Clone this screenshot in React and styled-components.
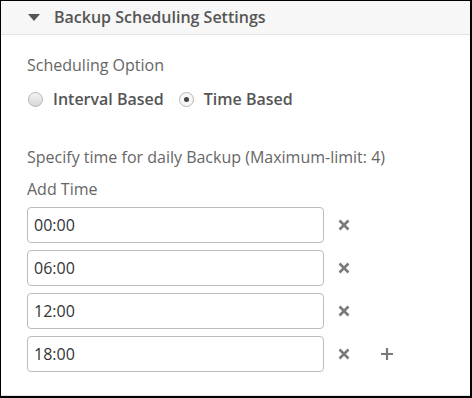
import React, { useState } from "react";
import styled, { createGlobalStyle } from "styled-components";

const GlobalStyle = createGlobalStyle`
  html, body {
    margin: 0;
    padding: 0;
    background: #ffffff;
  }
  body {
    font-family: "Open Sans", "Noto Sans", sans-serif;
  }
  * {
    box-sizing: border-box;
  }
`;

const initialTimes = ["00:00", "06:00", "12:00", "18:00"];

const App = () => {
  const [mode, setMode] = useState("time");
  const [times, setTimes] = useState(initialTimes);

  return (
    <>
      <GlobalStyle />
      <Frame>
        <Header>
          <Caret viewBox="0 0 12 8" aria-hidden="true">
            <path d="M0 0 L12 0 L6 7 Z" fill="#555555" />
          </Caret>
          <HeaderTitle>Backup Scheduling Settings</HeaderTitle>
        </Header>
        <Body>
          <Label>Scheduling Option</Label>
          <RadioGroup>
            <RadioItem onClick={() => setMode("interval")}>
              <RadioDot checked={mode === "interval"} />
              <RadioText>Interval Based</RadioText>
            </RadioItem>
            <RadioItem onClick={() => setMode("time")}>
              <RadioDot checked={mode === "time"} />
              <RadioText>Time Based</RadioText>
            </RadioItem>
          </RadioGroup>

          <Label margin="36px 0 0 0">
            Specify time for daily Backup (Maximum-limit: 4)
          </Label>
          <Label margin="10px 0 0 0">Add Time</Label>

          <TimeList>
            {times.map((t, i) => (
              <TimeRow key={i}>
                <TimeInput
                  value={t}
                  onChange={(e) => {
                    const next = [...times];
                    next[i] = e.target.value;
                    setTimes(next);
                  }}
                />
                <IconButton aria-label="remove">
                  <svg width="12" height="12" viewBox="0 0 12 12">
                    <path
                      d="M1.5 1.5 L10.5 10.5 M10.5 1.5 L1.5 10.5"
                      stroke="#7a7a7a"
                      strokeWidth="2.6"
                      strokeLinecap="butt"
                    />
                  </svg>
                </IconButton>
                {i === times.length - 1 && (
                  <IconButton aria-label="add" spaced>
                    <svg width="14" height="14" viewBox="0 0 14 14">
                      <path
                        d="M7 1 L7 13 M1 7 L13 7"
                        stroke="#7a7a7a"
                        strokeWidth="2.2"
                      />
                    </svg>
                  </IconButton>
                )}
              </TimeRow>
            ))}
          </TimeList>
        </Body>
      </Frame>
    </>
  );
};

const Frame = styled.div`
  width: 472px;
  height: 398px;
  border: 1px solid #000000;
  border-right-width: 2px;
  border-bottom-width: 2px;
  background: #ffffff;
  display: flex;
  flex-direction: column;
  overflow: hidden;
`;

const Header = styled.div`
  height: 34px;
  background: #f7f7f7;
  border-bottom: 1px solid #e4e4e4;
  display: flex;
  align-items: center;
  padding-left: 27px;
`;

const Caret = styled.svg`
  width: 12px;
  height: 8px;
  margin-right: 14px;
`;

const HeaderTitle = styled.div`
  font-size: 16px;
  font-weight: 600;
  color: #555555;
  margin-top: -1px;
`;

const Body = styled.div`
  flex: 1;
  padding: 19px 26px 0 26px;
  display: flex;
  flex-direction: column;
  border-bottom: 1px solid #e4e4e4;
`;

const Label = styled.div`
  font-size: 16px;
  color: #666666;
  margin: ${(props) => (props.margin ? props.margin : 0)};
  line-height: 22px;
`;

const RadioGroup = styled.div`
  display: flex;
  flex-direction: row;
  gap: 14px;
  margin-top: 12px;
  line-height: 22px;
`;

const RadioItem = styled.label`
  display: flex;
  align-items: center;
  cursor: pointer;
`;

const RadioDot = styled.span`
  width: 15px;
  height: 15px;
  border-radius: 50%;
  border: 1px solid #b5b5b5;
  margin-right: 10px;
  margin-left: 1px;
  position: relative;
  background: ${(props) =>
    props.checked ? "#f7f7f7" : "linear-gradient(#f4f4f4, #d6d6d6)"};
  &::after {
    content: "";
    display: ${(props) => (props.checked ? "block" : "none")};
    position: absolute;
    left: 4px;
    top: 4px;
    width: 5px;
    height: 5px;
    border-radius: 50%;
    background: #444444;
  }
`;

const RadioText = styled.span`
  font-size: 16px;
  font-weight: 600;
  color: #555555;
`;

const TimeList = styled.div`
  display: flex;
  flex-direction: column;
  gap: 7px;
  margin-top: 7px;
`;

const TimeRow = styled.div`
  display: flex;
  flex-direction: row;
  align-items: center;
`;

const TimeInput = styled.input`
  width: 297px;
  height: 36px;
  border: 1px solid #bcbcbc;
  border-radius: 4px;
  padding: 0 6px;
  font-family: "Open Sans", "Noto Sans", sans-serif;
  font-size: 16px;
  color: #333333;
  outline: none;
`;

const IconButton = styled.button`
  border: none;
  background: transparent;
  padding: 0;
  width: 14px;
  height: 14px;
  display: flex;
  align-items: center;
  justify-content: center;
  margin-left: ${(props) => (props.spaced ? "29px" : "13px")};
  cursor: pointer;
`;

export default App;
